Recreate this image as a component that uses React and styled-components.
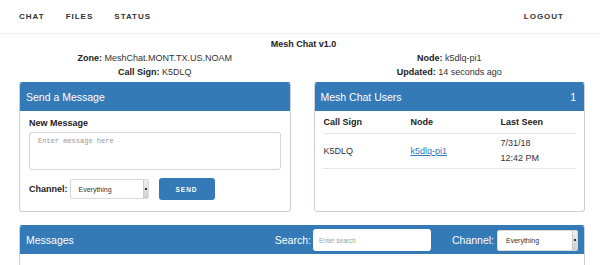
import React from "react";
import styled, { createGlobalStyle } from "styled-components";

const GlobalStyle = createGlobalStyle`
	html, body {
		margin: 0;
		padding: 0;
		background: #ffffff;
	}
	body {
		font-family: "Liberation Sans", Arial, sans-serif;
		color: #333333;
	}
`;

const PRIMARY = "#337ab7";

// ===================== Styled Components
const Page = styled.div`
	width: 600px;
	height: 265px;
	overflow: hidden;
`;

const NavBar = styled.nav`
	height: 33px;
	border-bottom: 1px solid #eeeeee;
	display: flex;
	align-items: center;
	justify-content: space-between;
	padding: 0 36px 0 19px;
`;

const NavGroup = styled.div`
	display: flex;
	gap: 21px;
`;

const NavLink = styled.span`
	font-size: 8px;
	font-weight: 700;
	letter-spacing: 1px;
	color: #333333;
`;

const Container = styled.div`
	width: 566px;
	margin: 0 0 0 19px;
`;

const Title = styled.div`
	margin-top: 4px;
	text-align: center;
	font-size: 9px;
	font-weight: 700;
	line-height: 13px;
	color: #222222;
	padding-left: 3px;
`;

const InfoGrid = styled.div`
	display: grid;
	grid-template-columns: 1fr 1fr;
	column-gap: 23px;
	font-size: 9px;
	line-height: 14px;
	text-align: center;
	color: #333333;
`;

const Label = styled.b`
	color: #222222;
`;

const Columns = styled.div`
	margin-top: 3px;
	display: grid;
	grid-template-columns: 1fr 1fr;
	column-gap: 23px;
	align-items: stretch;
`;

const Panel = styled.div`
	border: 1px solid #c9d3dc;
	border-top-color: ${PRIMARY};
	border-radius: 3px;
	display: flex;
	flex-direction: column;
	overflow: hidden;
	margin-top: ${(p) => p.$mt || 0}px;
`;

const PanelHeading = styled.div`
	height: 28px;
	background: ${PRIMARY};
	color: #ffffff;
	display: flex;
	align-items: center;
	justify-content: space-between;
	padding: ${(p) => p.$pad || "0 8px 0 6px"};
	font-size: 10.5px;
	flex-shrink: 0;
`;

const PanelBody = styled.div`
	flex: 1;
	padding: ${(p) => p.$pad};
`;

const FieldLabel = styled.div`
	font-size: 9px;
	font-weight: 700;
	line-height: 14px;
	color: #222222;
	margin-bottom: 2px;
`;

const MessageBox = styled.textarea`
	display: block;
	box-sizing: border-box;
	width: 252px;
	height: 38px;
	border: 1px solid #d6d6d6;
	border-radius: 3px;
	padding: 4px 8px;
	resize: none;
	font-family: "Liberation Mono", "Courier New", monospace;
	font-size: 7px;
	&::placeholder {
		color: #999999;
	}
`;

const ChannelRow = styled.div`
	margin-top: 8px;
	display: flex;
	align-items: center;
	gap: 2px;
`;

const InlineLabel = styled.span`
	font-size: ${(p) => p.$size}px;
	font-weight: 700;
	color: ${(p) => p.$color};
`;

const FakeSelect = styled.div`
	position: relative;
	box-sizing: border-box;
	width: ${(p) => p.$w}px;
	height: ${(p) => p.$h}px;
	margin-left: ${(p) => p.$ml || 0}px;
	background: #ffffff;
	border: 1px solid #d9d9d9;
	border-radius: 2px;
	font-size: 7px;
	color: #333333;
	display: flex;
	align-items: center;
	padding-left: 8px;

	&::after {
		content: "";
		position: absolute;
		right: 0;
		top: 0;
		bottom: 0;
		width: 4px;
		background: linear-gradient(#f0f0f0, #cfcfcf);
		border-left: 1px solid #cccccc;
	}
	&::before {
		content: "";
		position: absolute;
		right: 1px;
		top: 50%;
		width: 2px;
		height: 2px;
		margin-top: -1px;
		background: #333333;
		z-index: 1;
	}
`;

const SendButton = styled.button`
	margin-left: 8px;
	width: 56px;
	height: 22px;
	border: none;
	border-radius: 3px;
	background: ${PRIMARY};
	color: #ffffff;
	font-family: "Liberation Sans", Arial, sans-serif;
	font-size: 6.5px;
	font-weight: 700;
	letter-spacing: 1px;
	padding: 0;
`;

const UsersTable = styled.table`
	width: 100%;
	border-collapse: collapse;
	font-size: 9px;
	color: #333333;
`;

const Th = styled.th`
	text-align: left;
	font-weight: 700;
	color: #222222;
	height: 22px;
	padding: 0 1px;
	border-bottom: 1px solid #e6e6e6;
	width: ${(p) => p.$w || "auto"};
`;

const Td = styled.td`
	padding: 2px 1px;
	height: 29px;
	line-height: 15px;
	border-bottom: 1px solid #e6e6e6;
`;

const NodeLink = styled.a`
	color: ${PRIMARY};
	text-decoration: underline;
`;

const HeaderTools = styled.div`
	display: flex;
	align-items: center;
`;

const SearchInput = styled.div`
	margin-left: 2px;
	box-sizing: border-box;
	width: 118px;
	height: 22px;
	background: #ffffff;
	border-radius: 3px;
	font-size: 6.5px;
	color: #a0a0a0;
	display: flex;
	align-items: center;
	padding-left: 6px;
	margin-right: 21px;
`;

const MessagesBody = styled.div`
	height: 40px;
`;

const users = [
	{ call: "K5DLQ", node: "k5dlq-pi1", date: "7/31/18", time: "12:42 PM" },
];

const App = () => {
	return (
		<Page>
			<GlobalStyle />
			<NavBar>
				<NavGroup>
					<NavLink>CHAT</NavLink>
					<NavLink>FILES</NavLink>
					<NavLink>STATUS</NavLink>
				</NavGroup>
				<NavLink>LOGOUT</NavLink>
			</NavBar>

			<Container>
				<Title>Mesh Chat v1.0</Title>
				<InfoGrid>
					<div>
						<Label>Zone:</Label> MeshChat.MONT.TX.US.NOAM
					</div>
					<div>
						<Label>Node:</Label> k5dlq-pi1
					</div>
					<div>
						<Label>Call Sign:</Label> K5DLQ
					</div>
					<div>
						<Label>Updated:</Label> 14 seconds ago
					</div>
				</InfoGrid>

				<Columns>
					<Panel>
						<PanelHeading>Send a Message</PanelHeading>
						<PanelBody $pad="5px 9px 11px">
							<FieldLabel>New Message</FieldLabel>
							<MessageBox placeholder="Enter message here" />
							<ChannelRow>
								<InlineLabel $size={9} $color="#222222">
									Channel:
								</InlineLabel>
								<FakeSelect $w={79} $h={20}>Everything</FakeSelect>
								<SendButton>SEND</SendButton>
							</ChannelRow>
						</PanelBody>
					</Panel>

					<Panel>
						<PanelHeading>
							<span>Mesh Chat Users</span>
							<span>1</span>
						</PanelHeading>
						<PanelBody $pad="0 8px 0 8px">
							<UsersTable>
								<thead>
									<tr>
										<Th $w="85px">Call Sign</Th>
										<Th $w="88px">Node</Th>
										<Th>Last Seen</Th>
									</tr>
								</thead>
								<tbody>
									{users.map((u) => (
										<tr key={u.call}>
											<Td>{u.call}</Td>
											<Td>
												<NodeLink href="#">{u.node}</NodeLink>
											</Td>
											<Td>
												{u.date}
												<br />
												{u.time}
											</Td>
										</tr>
									))}
								</tbody>
							</UsersTable>
						</PanelBody>
					</Panel>
				</Columns>

				<Panel $mt={13}>
					<PanelHeading $pad="0 6px 0 6px">
						<span>Messages</span>
						<HeaderTools>
							<span>Search:</span>
							<SearchInput>Enter search</SearchInput>
							<span>Channel:</span>
							<FakeSelect $w={81} $h={21} $ml={3}>
								Everything
							</FakeSelect>
						</HeaderTools>
					</PanelHeading>
					<MessagesBody />
				</Panel>
			</Container>
		</Page>
	);
};

export default App;
